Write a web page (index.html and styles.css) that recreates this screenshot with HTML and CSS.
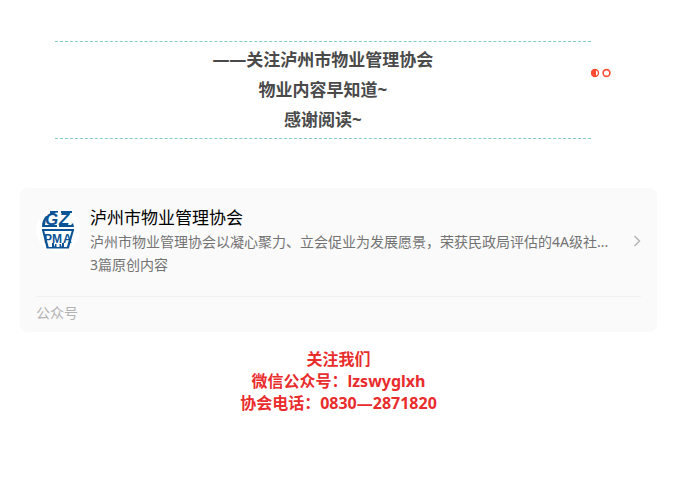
FILE: index.html
```
<!DOCTYPE html>
<html lang="zh-CN">
<head>
    <meta charset="UTF-8">
    <meta name="viewport" content="width=device-width, initial-scale=1.0">
    <title>泸州市物业管理协会</title>
    <link rel="stylesheet" href="styles.css">
</head>
<body>
    <div class="article">
        <!-- 关注提示 -->
        <div class="slogan">
            <div class="slogan-text">
                <p>——关注泸州市物业管理协会</p>
                <p>物业内容早知道~</p>
                <p>感谢阅读~</p>
            </div>
            <svg class="slogan-dots" viewBox="0 0 20 10" fill="none" stroke="#ff4c33">
                <circle cx="4" cy="5" r="3.5" stroke-width="1.4"/>
                <path d="M5 1.5h-1a3.500 3.500 0 0 0 0 7h1z" fill="#ff4c33" stroke="none"/>
                <circle cx="15.500" cy="5" r="3.4" stroke-width="1.6"/>
            </svg>
        </div>

        <!-- 公众号名片 -->
        <a class="card" href="#">
            <div class="card-main">
                <svg class="avatar" viewBox="0 0 44 44">
                    <circle cx="22" cy="22" r="22" fill="#fff"/>
                    <g fill="#0b5394">
                        <path d="M14 3h8v1.500q-5 0-8 3z"/>
                        <path d="M25 3h11v2H25z"/>
                        <path d="M10 8q-4 4-4 11h15v-2H9q0-5 3-9z"/>
                        <path d="M23 17h12l2-2 1 4H23z"/>
                        <path d="M6 21h32v2H6z"/>
                        <path d="M6 22h2l5 18h-2.500z"/>
                        <path d="M36 22h2l-5 18h-2.500z"/>
                        <path d="M10.500 39H17q2 0 2-3h1.500v3h3v-3H25q0 3 2 3h6v1.500H10.500z"/>
                        <path d="M16 35h2v4h-2zM26 35h2v4h-2z"/>
                        <text class="logo-top" x="9" y="17">G</text>
                        <text class="logo-top" x="23" y="17">Z</text>
                        <text class="logo-bottom" x="8" y="35">P</text>
                        <text class="logo-bottom" x="16" y="35">M</text>
                        <text class="logo-bottom" x="27" y="35">A</text>
                    </g>
                </svg>
                <div class="card-info">
                    <div class="card-name">泸州市物业管理协会</div>
                    <div class="card-desc">泸州市物业管理协会以凝心聚力、立会促业为发展愿景，荣获民政局评估的4A级社...</div>
                    <div class="card-desc">3篇原创内容</div>
                </div>
                <svg class="arrow" viewBox="0 0 8 12" fill="none" stroke="#b2b2b2" stroke-width="1.4">
                    <path d="M1.500 1l5 5-5 5"/>
                </svg>
            </div>
            <div class="card-type">公众号</div>
        </a>

        <!-- 联系方式 -->
        <div class="contact">
            <p>关注我们</p>
            <p>微信公众号：lzswyglxh</p>
            <p>协会电话：0830—2871820</p>
        </div>
    </div>
</body>
</html>
```
FILE: styles.css
```
* {
    margin: 0;
    padding: 0;
    box-sizing: border-box;
}

body {
    font-family: "Microsoft YaHei", "Noto Sans", "Noto Sans CJK SC", sans-serif;
    background: #fff;
}

.article {
    padding: 41px 21px 41px 20px;
}

.slogan {
    display: flex;
    align-items: center;
    padding-left: 35px;
    margin-bottom: 49px;
}

.slogan-text {
    width: 89%;
    padding: 3px 0;
    border-top: 1px dashed #84cbc5;
    border-bottom: 1px dashed #84cbc5;
    color: #4a4a4a;
    font-size: 17px;
    font-weight: bold;
    line-height: 30px;
    text-align: center;
}

.slogan-dots {
    flex: none;
    width: 20px;
    height: 10px;
    margin-bottom: 34px;
}

.card {
    display: block;
    padding: 18px 16px 9px;
    border-radius: 8px;
    background: #fafafa;
    text-decoration: none;
}

.card-main {
    display: flex;
    align-items: center;
    gap: 10px;
    padding-bottom: 20px;
    border-bottom: 1px solid #f0f0f0;
}

.avatar {
    flex: none;
    align-self: flex-start;
    width: 44px;
    height: 44px;
    margin-top: 2px;
}

.logo-top,
.logo-bottom {
    font-family: "Liberation Sans", sans-serif;
    font-weight: bold;
}

.logo-top {
    font-size: 17px;
    font-style: italic;
}

.logo-bottom {
    font-size: 12px;
}

.card-info {
    flex: 1;
    min-width: 0;
}

.card-name {
    color: #000;
    font-size: 17px;
    line-height: 24px;
}

.card-desc {
    overflow: hidden;
    color: #737373;
    font-size: 14px;
    line-height: 23px;
    text-overflow: ellipsis;
    white-space: nowrap;
}

.arrow {
    flex: none;
    width: 8px;
    height: 12px;
}

.card-type {
    padding-top: 6px;
    color: #b2b2b2;
    font-size: 14px;
    line-height: 20px;
}

.contact {
    margin-top: 16px;
    color: #e92c2c;
    font-size: 16px;
    font-weight: bold;
    line-height: 22px;
    text-align: center;
}
```
